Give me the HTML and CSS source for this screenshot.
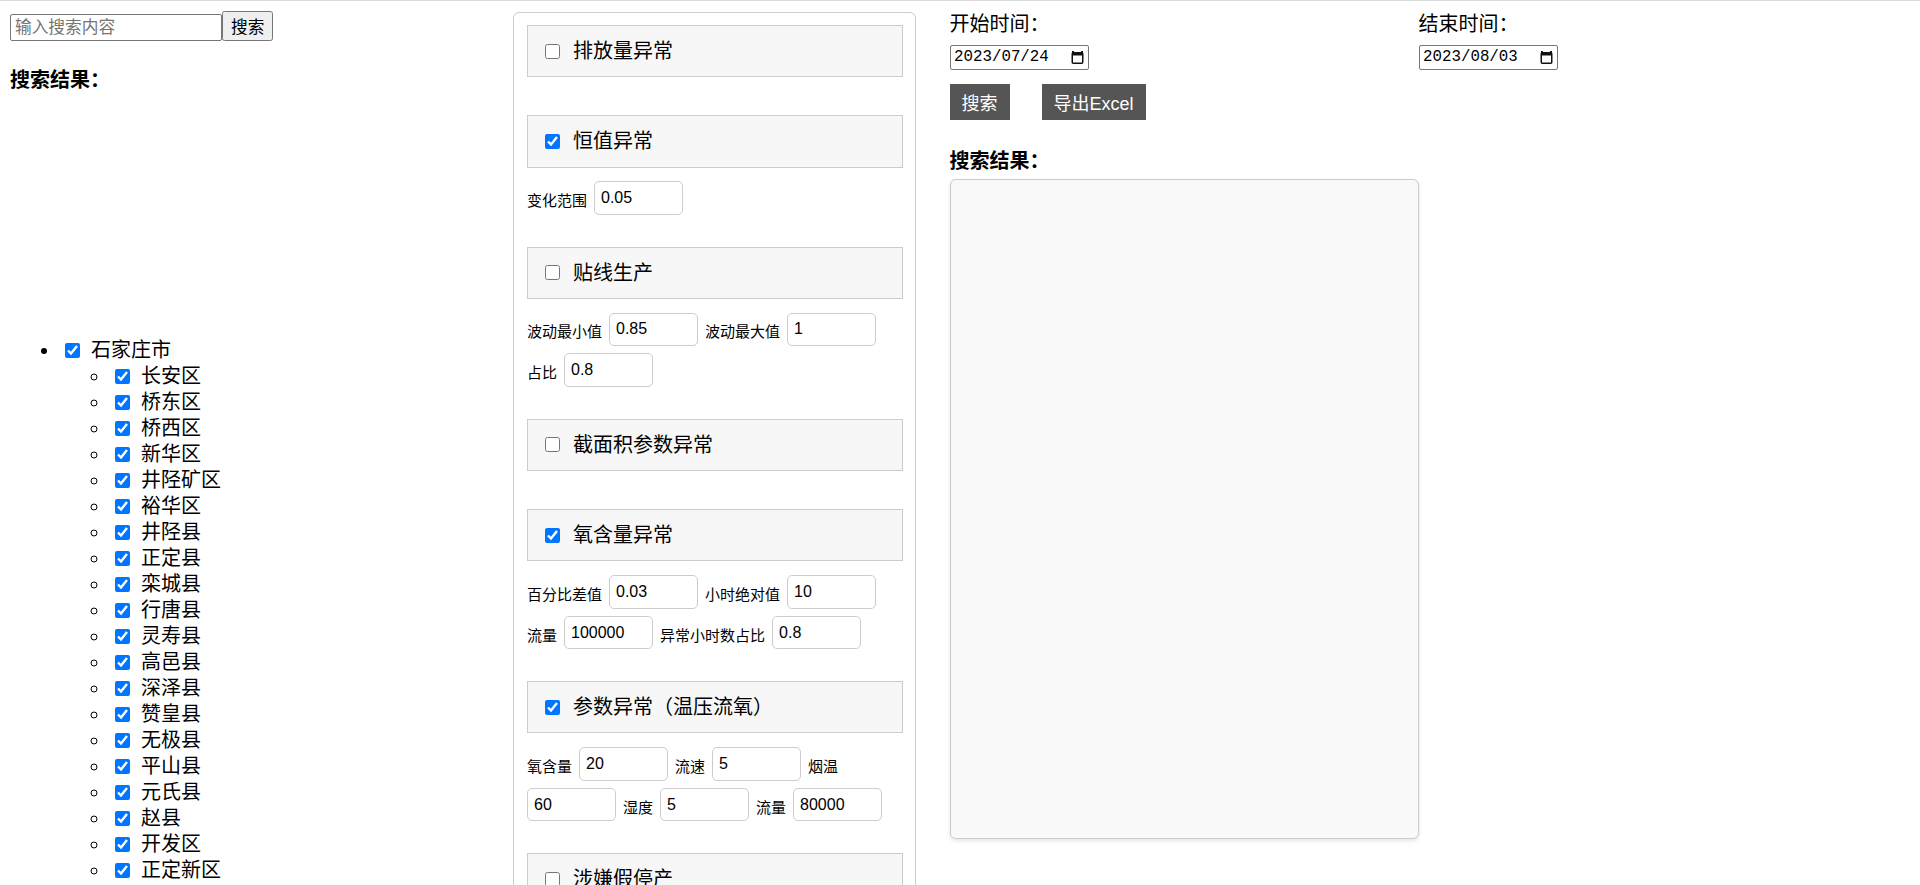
FILE: index.html
```html
<!DOCTYPE html>
<html lang="zh-CN">
<head>
<meta charset="utf-8">
<title>异常筛查</title>
<link rel="stylesheet" href="styles.css">
</head>
<body>
<div class="layout">
  <div class="left">
    <div class="search-row"><input class="search-input" type="text" placeholder="输入搜索内容"><button class="search-btn">搜索</button></div>
    <div class="result-title">搜索结果：</div>
    <div class="left-results"></div>
    <ul class="tree">
      <li><input type="checkbox" class="cb" checked><span>石家庄市</span>
        <ul class="sub">
          <li><input type="checkbox" class="cb" checked><span>长安区</span></li>
          <li><input type="checkbox" class="cb" checked><span>桥东区</span></li>
          <li><input type="checkbox" class="cb" checked><span>桥西区</span></li>
          <li><input type="checkbox" class="cb" checked><span>新华区</span></li>
          <li><input type="checkbox" class="cb" checked><span>井陉矿区</span></li>
          <li><input type="checkbox" class="cb" checked><span>裕华区</span></li>
          <li><input type="checkbox" class="cb" checked><span>井陉县</span></li>
          <li><input type="checkbox" class="cb" checked><span>正定县</span></li>
          <li><input type="checkbox" class="cb" checked><span>栾城县</span></li>
          <li><input type="checkbox" class="cb" checked><span>行唐县</span></li>
          <li><input type="checkbox" class="cb" checked><span>灵寿县</span></li>
          <li><input type="checkbox" class="cb" checked><span>高邑县</span></li>
          <li><input type="checkbox" class="cb" checked><span>深泽县</span></li>
          <li><input type="checkbox" class="cb" checked><span>赞皇县</span></li>
          <li><input type="checkbox" class="cb" checked><span>无极县</span></li>
          <li><input type="checkbox" class="cb" checked><span>平山县</span></li>
          <li><input type="checkbox" class="cb" checked><span>元氏县</span></li>
          <li><input type="checkbox" class="cb" checked><span>赵县</span></li>
          <li><input type="checkbox" class="cb" checked><span>开发区</span></li>
          <li><input type="checkbox" class="cb" checked><span>正定新区</span></li>
        </ul>
      </li>
    </ul>
  </div>

  <div class="panel">
    <div class="section empty">
      <div class="sec-head"><input type="checkbox" class="cb"><span>排放量异常</span></div>
    </div>
    <div class="section">
      <div class="sec-head"><input type="checkbox" class="cb" checked><span>恒值异常</span></div>
      <div class="params">
        <label>变化范围</label><input class="num" type="text" value="0.05">
      </div>
    </div>
    <div class="section">
      <div class="sec-head"><input type="checkbox" class="cb"><span>贴线生产</span></div>
      <div class="params">
        <label>波动最小值</label><input class="num" type="text" value="0.85">
        <label>波动最大值</label><input class="num" type="text" value="1">
        <label>占比</label><input class="num" type="text" value="0.8">
      </div>
    </div>
    <div class="section empty">
      <div class="sec-head"><input type="checkbox" class="cb"><span>截面积参数异常</span></div>
    </div>
    <div class="section">
      <div class="sec-head"><input type="checkbox" class="cb" checked><span>氧含量异常</span></div>
      <div class="params">
        <label>百分比差值</label><input class="num" type="text" value="0.03">
        <label>小时绝对值</label><input class="num" type="text" value="10">
        <label>流量</label><input class="num" type="text" value="100000">
        <label>异常小时数占比</label><input class="num" type="text" value="0.8">
      </div>
    </div>
    <div class="section">
      <div class="sec-head"><input type="checkbox" class="cb" checked><span>参数异常（温压流氧）</span></div>
      <div class="params">
        <label>氧含量</label><input class="num" type="text" value="20">
        <label>流速</label><input class="num" type="text" value="5">
        <label>烟温</label><input class="num" type="text" value="60">
        <label>湿度</label><input class="num" type="text" value="5">
        <label>流量</label><input class="num" type="text" value="80000">
      </div>
    </div>
    <div class="section empty">
      <div class="sec-head"><input type="checkbox" class="cb"><span>涉嫌假停产</span></div>
    </div>
  </div>

  <div class="right">
    <div class="date-row">
      <div class="date-group">
        <div class="date-label">开始时间：</div>
        <div class="date-field"><span class="date-text">2023/07/24</span><svg class="cal" width="13" height="14" viewBox="0 0 13 14"><rect x="1.25" y="2.75" width="10.5" height="10.5" rx="1" fill="none" stroke="#111" stroke-width="1.5"/><rect x="1" y="2.5" width="11" height="3" fill="#111"/><rect x="1" y="1" width="2" height="3" fill="#111"/><rect x="10" y="1" width="2" height="3" fill="#111"/></svg></div>
      </div>
      <div class="date-group">
        <div class="date-label">结束时间：</div>
        <div class="date-field"><span class="date-text">2023/08/03</span><svg class="cal" width="13" height="14" viewBox="0 0 13 14"><rect x="1.25" y="2.75" width="10.5" height="10.5" rx="1" fill="none" stroke="#111" stroke-width="1.5"/><rect x="1" y="2.5" width="11" height="3" fill="#111"/><rect x="1" y="1" width="2" height="3" fill="#111"/><rect x="10" y="1" width="2" height="3" fill="#111"/></svg></div>
      </div>
    </div>
    <div class="btn-row">
      <button class="btn">搜索</button>
      <button class="btn">导出Excel</button>
    </div>
    <div class="result-title right-title">搜索结果：</div>
    <div class="result-box"></div>
  </div>
</div>
</body>
</html>
```

FILE: styles.css
```css
html {
  border-top: 1px solid #dcdcdc;
}
body {
  margin: 10px;
  font-family: "Liberation Sans", "Noto Sans CJK SC", sans-serif;
  color: #000;
  background: #fff;
}
.layout {
  display: flex;
  align-items: flex-start;
  min-height: 1950px;
}

/* left column */
.left {
  width: 503px;
  flex: none;
}
.search-row {
  display: flex;
  align-items: flex-end;
  height: 30px;
}
.search-input {
  box-sizing: border-box;
  width: 212px;
  height: 27px;
  margin: 0;
  padding: 0 4px;
  border: 1px solid #767676;
  border-radius: 2px;
  font-family: "Liberation Sans", "Noto Sans CJK SC", sans-serif;
  font-size: 16.7px;
}
.search-input::placeholder {
  color: #757575;
}
.search-btn {
  box-sizing: border-box;
  height: 30px;
  margin: 0;
  padding: 0 8px;
  border: 1px solid #767676;
  border-radius: 2.5px;
  background: #efefef;
  color: #000;
  font-family: "Liberation Sans", "Noto Sans CJK SC", sans-serif;
  font-size: 16.7px;
}
.result-title {
  margin-top: 26px;
  font-size: 20px;
  line-height: 26px;
  font-weight: bold;
}
.left-results {
  height: 224px;
}
.tree {
  margin: 20px 0;
  padding-left: 50px;
  font-size: 20px;
  line-height: 26px;
}
.tree .sub {
  margin: 0;
  padding-left: 50px;
}
.cb {
  width: 15px;
  height: 15px;
  vertical-align: middle;
  margin: -3px 11px 0 5px;
}

/* middle panel */
.panel {
  box-sizing: border-box;
  width: 403px;
  flex: none;
  margin-top: 1px;
  padding: 12px 12px 0 13px;
  border: 1px solid #ccc;
  border-radius: 6px;
  min-height: 1940px;
}
.section {
  margin-bottom: 31.7px;
}
.section.empty {
  margin-bottom: 38px;
}
.sec-head {
  padding: 12px 12px;
  border: 1px solid #ccc;
  background: #f7f7f7;
  font-size: 20px;
  line-height: 26.3px;
}
.sec-head .cb {
  margin: -3px 13px 0 5px;
}
.params {
  display: flex;
  flex-wrap: wrap;
  align-items: center;
  gap: 7px;
  margin-top: 13.7px;
}
.params label {
  font-size: 15px;
  line-height: 20px;
  margin-top: 6px;
}
.num {
  box-sizing: border-box;
  width: 89px;
  height: 33.7px;
  margin: 0;
  padding: 0 6px;
  border: 1px solid #ccc;
  border-radius: 5px;
  font-family: "Liberation Sans", sans-serif;
  font-size: 16px;
  color: #000;
  background: #fff;
}

/* right column */
.right {
  margin-left: 33.5px;
  flex: none;
  width: 940px;
}
.date-row {
  display: flex;
}
.date-group {
  width: 469px;
}
.date-label {
  font-size: 20px;
  line-height: 26px;
}
.date-field {
  box-sizing: border-box;
  width: 139.5px;
  height: 24.5px;
  margin-top: 8px;
  padding: 0 4px 0 3.5px;
  border: 1px solid #767676;
  border-radius: 2px;
  display: flex;
  align-items: center;
  justify-content: space-between;
}
.date-text {
  font-family: "Liberation Mono", monospace;
  font-size: 15.8px;
  line-height: 20px;
}
.cal {
  display: block;
}
.btn-row {
  display: flex;
  gap: 32px;
  margin-top: 14.5px;
}
.btn {
  height: 36px;
  margin: 0;
  padding: 0 12px;
  border: none;
  background: #555;
  color: #fff;
  font-family: "Liberation Sans", "Noto Sans CJK SC", sans-serif;
  font-size: 18px;
}
.right-title {
  margin-top: 28px;
}
.result-box {
  box-sizing: border-box;
  width: 469px;
  height: 660px;
  margin-top: 5.3px;
  border: 1px solid #ccc;
  border-radius: 6px;
  background: #f9f9f9;
  box-shadow: 0 2px 4px rgba(0, 0, 0, 0.1);
}
```
